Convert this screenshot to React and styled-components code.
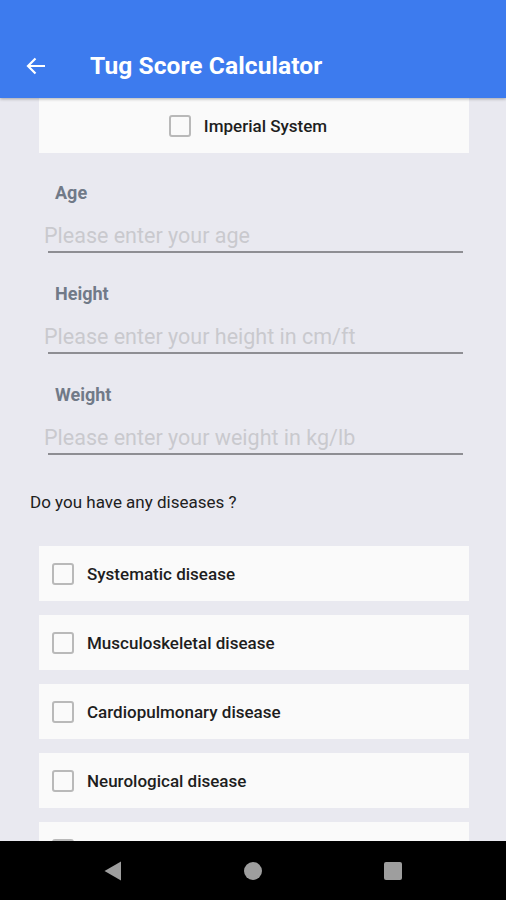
import React from 'react';
import styled, { createGlobalStyle } from 'styled-components';

const GlobalStyle = createGlobalStyle`
  html, body {
    margin: 0;
    padding: 0;
    background: #e9e9f0;
    font-family: Roboto, "Noto Sans", sans-serif;
  }
`;

const diseases = [
  'Systematic disease',
  'Musculoskeletal disease',
  'Cardiopulmonary disease',
  'Neurological disease',
  'Other disease',
];

const fields = [
  { label: 'Age', hint: 'Please enter your age' },
  { label: 'Height', hint: 'Please enter your height in cm/ft' },
  { label: 'Weight', hint: 'Please enter your weight in kg/lb' },
];

const App = () => {
  return (
    <Screen>
      <GlobalStyle />
      <AppBar>
        <StatusBar />
        <Toolbar>
          <BackButton>
            <svg width="20" height="20" viewBox="0 0 20 20">
              <path d="M19 10H2.5M9.5 2.5L2 10l7.5 7.5" fill="none" stroke="#fff" strokeWidth="2.2" />
            </svg>
          </BackButton>
          <Title>Tug Score Calculator</Title>
        </Toolbar>
      </AppBar>

      <Content>
        <Card centered>
          <Box />
          <CardText>Imperial System</CardText>
        </Card>

        {fields.map((f, i) => (
          <Field key={f.label} first={i === 0}>
            <Label>{f.label}</Label>
            <InputLine>
              <Input placeholder={f.hint} />
            </InputLine>
          </Field>
        ))}

        <Question>Do you have any diseases ?</Question>

        <List>
          {diseases.map((d) => (
            <Card key={d}>
              <Box />
              <CardText>{d}</CardText>
            </Card>
          ))}
        </List>
      </Content>

      <NavBar>
        <svg width="20" height="22" viewBox="0 0 20 22">
          <path d="M18 1.5v19L1.5 11z" fill="#9e9e9e" />
        </svg>
        <svg width="20" height="20" viewBox="0 0 20 20">
          <circle cx="10" cy="10" r="9" fill="#9e9e9e" />
        </svg>
        <svg width="20" height="20" viewBox="0 0 20 20">
          <rect x="1" y="1" width="18" height="18" rx="2" fill="#9e9e9e" />
        </svg>
      </NavBar>
    </Screen>
  );
};

const Screen = styled.div`
  height: 900px;
  display: flex;
  flex-direction: column;
  overflow: hidden;
`;

const AppBar = styled.header`
  background: #3d7bee;
  box-shadow: 0 1px 3px rgba(0, 0, 0, 0.3);
  position: relative;
  z-index: 2;
  flex: none;
`;

const StatusBar = styled.div`
  height: 33px;
`;

const Toolbar = styled.div`
  height: 65px;
  display: flex;
  align-items: center;
`;

const BackButton = styled.div`
  width: 90px;
  padding-left: 26px;
  box-sizing: border-box;
  display: flex;
  align-items: center;
`;

const Title = styled.h1`
  margin: 0;
  color: #fff;
  font-size: 24.5px;
  font-weight: 700;
  letter-spacing: 0.1px;
`;

const Content = styled.main`
  flex: 1;
  overflow: hidden;
`;

const Card = styled.div`
  height: 55px;
  margin: 0 37px 0 39px;
  background: #fafafa;
  display: flex;
  align-items: center;
  justify-content: ${(p) => (p.centered ? 'center' : 'flex-start')};
  padding: ${(p) => (p.centered ? '0 12px 0 0' : '0 0 0 13px')};
  box-sizing: border-box;
  gap: 13px;
  flex: none;
`;

const Box = styled.span`
  width: 22px;
  height: 22px;
  box-sizing: border-box;
  border: 2px solid #b9b9b9;
  border-radius: 3px;
  flex: none;
`;

const CardText = styled.span`
  font-size: 17px;
  font-weight: 500;
  color: #1e1e1e;
`;

const Field = styled.div`
  margin-top: ${(p) => (p.first ? '30px' : '31px')};
`;

const Label = styled.div`
  margin-left: 55px;
  height: 20px;
  line-height: 20px;
  font-size: 18px;
  font-weight: 700;
  color: #717a88;
`;

const InputLine = styled.div`
  margin: 18px 43px 0 48px;
  border-bottom: 2px solid #8e8e93;
`;

const Input = styled.input`
  display: block;
  margin-left: -4px;
  width: calc(100% + 4px);
  height: 30px;
  box-sizing: border-box;
  padding: 0 0 1px 0;
  border: none;
  background: transparent;
  font-family: Roboto, sans-serif;
  font-size: 21.5px;
  outline: none;
  &::placeholder {
    color: #c9c9ce;
  }
`;

const Question = styled.p`
  margin: 37px 0 0 30px;
  height: 20px;
  line-height: 20px;
  font-size: 17px;
  color: #202020;
`;

const List = styled.div`
  margin-top: 34px;
  display: flex;
  flex-direction: column;
  gap: 14px;
`;

const NavBar = styled.nav`
  height: 59px;
  flex: none;
  background: #000;
  display: grid;
  grid-template-columns: repeat(3, 140px);
  justify-content: center;
  justify-items: center;
  align-items: center;
`;

export default App;
